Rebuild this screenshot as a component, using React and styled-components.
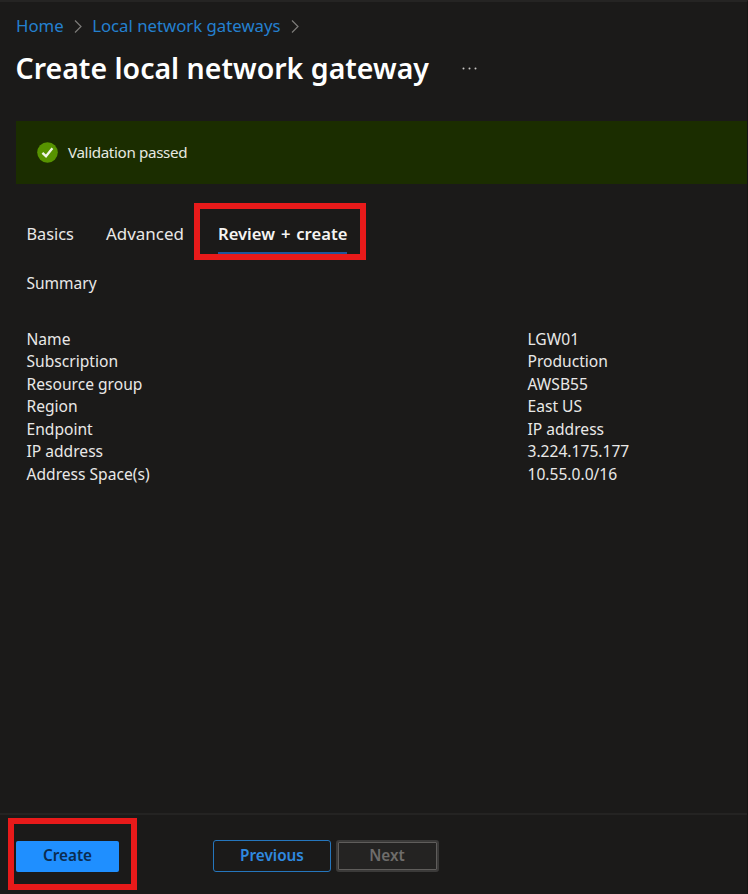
import React from "react";
import styled, { createGlobalStyle } from "styled-components";

const GlobalStyle = createGlobalStyle`
  * { box-sizing: border-box; }
  body { margin: 0; background: #1b1a19; }
`;

const Page = styled.div`
  display: flex;
  flex-direction: column;
  width: 100%;
  height: 894px;
  overflow: hidden;
  border-top: 2px solid #252423;
  border-right: 1px solid #151413;
  background: #1b1a19;
  color: #e9e8e7;
  font-family: "Noto Sans", sans-serif;
  font-size: 15.5px;
`;

const Breadcrumb = styled.nav`
  display: flex;
  align-items: center;
  height: 24px;
  margin: 12px 0 0 16px;
`;

const Crumb = styled.a`
  color: #2480cf;
  font-size: 16.75px;
  line-height: 24px;
  white-space: nowrap;
`;

const ChevronIcon = styled.svg`
  width: 8px;
  height: 13px;
  margin: 0 10px 0 10.5px;
  fill: none;
  stroke: #7d7b79;
  stroke-width: 1.2;
`;

const TitleRow = styled.header`
  display: flex;
  align-items: center;
  height: 40px;
  margin: 10px 0 0 15.5px;
`;

const Title = styled.h1`
  margin: 0;
  color: #fff;
  font-size: 28.5px;
  font-weight: 600;
  line-height: 40px;
  white-space: nowrap;
`;

const MoreIcon = styled.svg`
  width: 15px;
  height: 3px;
  margin: 1px 0 0 33px;
  fill: #c8c6c4;
`;

const Banner = styled.section`
  display: flex;
  align-items: center;
  gap: 10.5px;
  height: 63px;
  margin: 33px -1px 0 16px;
  padding: 0 0 2px 20.5px;
  background: #1b2d00;
  color: #e6e9e0;
  font-size: 15.2px;
  letter-spacing: -0.36px;
`;

const StatusIcon = styled.svg`
  width: 21px;
  height: 21px;
  margin-top: 1px;
`;

const Highlight = styled.div`
  width: ${(p) => p.$width}px;
  height: ${(p) => p.$height}px;
  flex: none;
  display: flex;
  border: 6px solid #e81a1a;
`;

const Tabs = styled.div`
  display: flex;
  margin: 19px 0 0 26.5px;
`;

const Tab = styled.div`
  width: ${(p) => p.$width}px;
  margin-top: 19px;
  font-size: ${(p) => p.$size || 16.5}px;
  line-height: 24px;
  white-space: nowrap;
`;

const ActiveTab = styled.div`
  height: 45px;
  margin-left: 18px;
  padding-top: 13px;
  border-bottom: 2px solid #1f569c;
  color: #f5f4f3;
  font-size: 16.6px;
  font-weight: 600;
  line-height: 24px;
  white-space: nowrap;
  word-spacing: 1.6px;
`;

const SummaryTitle = styled.h2`
  margin: 12px 0 0 26.5px;
  font-size: 15.5px;
  font-weight: 400;
  line-height: 22px;
`;

const Details = styled.dl`
  display: grid;
  grid-template-columns: 501px 1fr;
  grid-auto-rows: 22.5px;
  margin: 33.5px 0 0 26.5px;
  line-height: 22.5px;
`;

const Cell = styled.dd`
  margin: 0;
  font-size: 15.6px;
  white-space: nowrap;
`;

const Footer = styled.footer`
  display: flex;
  height: 81px;
  margin-top: auto;
  padding: 3px 0 0 8px;
  border-top: 2px solid #242322;
`;

const Button = styled.button`
  display: flex;
  align-items: center;
  justify-content: center;
  width: ${(p) => p.$width}px;
  padding: 0 0 2px;
  border-radius: 3px;
  font-family: inherit;
  font-size: 15.3px;
  font-weight: 600;
`;

const PrimaryButton = styled(Button)`
  height: 31px;
  margin: 17px 0 0 2px;
  padding-bottom: 3px;
  border: 0;
  border-radius: 2px;
  background: #1f8fff;
  color: #0b2c50;
`;

const SecondaryButton = styled(Button)`
  height: 32px;
  margin: 22px 0 0 76px;
  border: 1px solid #2576bd;
  background: transparent;
  color: #2f8ae0;
`;

const DisabledButton = styled(Button)`
  height: 32px;
  margin: 22px 0 0 4.5px;
  border: 2px solid #3b3a39;
  box-shadow: inset 0 0 0 1px #5f5d5b;
  background: #242322;
  color: #6f6d6b;
`;

const details = [
  ["Name", "LGW01"],
  ["Subscription", "Production"],
  ["Resource group", "AWSB55"],
  ["Region", "East US"],
  ["Endpoint", "IP address"],
  ["IP address", "3.224.175.177"],
  ["Address Space(s)", "10.55.0.0/16"],
];

const Chevron = () => (
  <ChevronIcon viewBox="0 0 8 13">
    <path d="M1 .5 7 6.5 1 12.5" />
  </ChevronIcon>
);

export default function App() {
  return (
    <Page>
      <GlobalStyle />
      <Breadcrumb>
        <Crumb>Home</Crumb>
        <Chevron />
        <Crumb>Local network gateways</Crumb>
        <Chevron />
      </Breadcrumb>
      <TitleRow>
        <Title>Create local network gateway</Title>
        <MoreIcon viewBox="0 0 15 3">
          <circle cx="1.5" cy="1.5" r="1" />
          <circle cx="7.5" cy="1.5" r="1" />
          <circle cx="13.5" cy="1.5" r="1" />
        </MoreIcon>
      </TitleRow>
      <Banner>
        <StatusIcon viewBox="0 0 21 21">
          <circle cx="10.5" cy="10.5" r="10.3" fill="#579300" />
          <path d="M5.4 10.8 9 14.2 15.4 6.2" fill="none" stroke="#f1f6e8" strokeWidth="2.3" />
        </StatusIcon>
        Validation passed
      </Banner>
      <Tabs>
        <Tab $width={79.5} $size={16.3}>Basics</Tab>
        <Tab $width={88} $size={16.95}>Advanced</Tab>
        <Highlight $width={172} $height={57}>
          <ActiveTab>Review + create</ActiveTab>
        </Highlight>
      </Tabs>
      <SummaryTitle>Summary</SummaryTitle>
      <Details>
        {details.map(([name, value]) => (
          <React.Fragment key={name}>
            <Cell as="dt">{name}</Cell>
            <Cell>{value}</Cell>
          </React.Fragment>
        ))}
      </Details>
      <Footer>
        <Highlight $width={129} $height={72}>
          <PrimaryButton $width={103}>Create</PrimaryButton>
        </Highlight>
        <SecondaryButton $width={118}>Previous</SecondaryButton>
        <DisabledButton $width={103} disabled>Next</DisabledButton>
      </Footer>
    </Page>
  );
}
